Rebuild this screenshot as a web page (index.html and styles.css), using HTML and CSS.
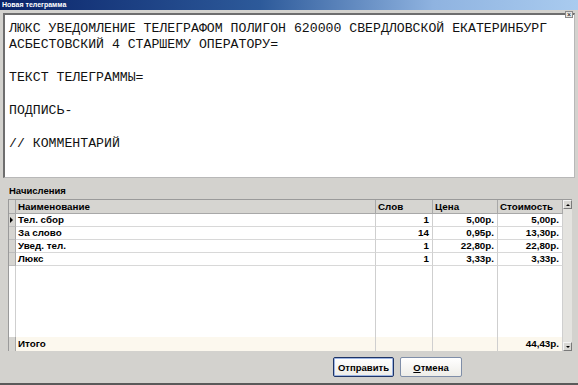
FILE: index.html
```html
<!DOCTYPE html>
<html lang="ru">
<head>
<meta charset="utf-8">
<title>Новая телеграмма</title>
<link rel="stylesheet" href="styles.css">
</head>
<body>
<div class="win">
  <div class="titlebar"><span class="title">Новая телеграмма</span></div>
  <span class="close">×</span>
  <div class="memo">ЛЮКС УВЕДОМЛЕНИЕ ТЕЛЕГРАФОМ ПОЛИГОН 620000 СВЕРДЛОВСКОЙ ЕКАТЕРИНБУРГ
АСБЕСТОВСКИЙ 4 СТАРШЕМУ ОПЕРАТОРУ=

ТЕКСТ ТЕЛЕГРАММЫ=

ПОДПИСЬ-

// КОММЕНТАРИЙ</div>
  <div class="panel">
    <div class="label">Начисления</div>
    <div class="gridwrap">
      <div class="grid">
        <div class="row head">
          <div class="cell ind"></div>
          <div class="cell">Наименование</div>
          <div class="cell">Слов</div>
          <div class="cell">Цена</div>
          <div class="cell">Стоимость</div>
        </div>
        <div class="row">
          <div class="cell ind"><span class="ptr"></span></div>
          <div class="cell">Тел. сбор</div>
          <div class="cell num">1</div>
          <div class="cell num">5,00р.</div>
          <div class="cell num">5,00р.</div>
        </div>
        <div class="row">
          <div class="cell ind"></div>
          <div class="cell">За слово</div>
          <div class="cell num">14</div>
          <div class="cell num">0,95р.</div>
          <div class="cell num">13,30р.</div>
        </div>
        <div class="row">
          <div class="cell ind"></div>
          <div class="cell">Увед. тел.</div>
          <div class="cell num">1</div>
          <div class="cell num">22,80р.</div>
          <div class="cell num">22,80р.</div>
        </div>
        <div class="row">
          <div class="cell ind"></div>
          <div class="cell">Люкс</div>
          <div class="cell num">1</div>
          <div class="cell num">3,33р.</div>
          <div class="cell num">3,33р.</div>
        </div>
        <div class="row filler">
          <div class="cell"></div>
          <div class="cell"></div>
          <div class="cell"></div>
          <div class="cell"></div>
          <div class="cell"></div>
        </div>
        <div class="row total">
          <div class="cell ind"></div>
          <div class="cell">Итого</div>
          <div class="cell"></div>
          <div class="cell"></div>
          <div class="cell num">44,43р.</div>
        </div>
      </div>
      <div class="vscroll">
        <div class="sbtn"><span class="tri up"></span></div>
        <div class="track"></div>
        <div class="sbtn"><span class="tri down"></span></div>
      </div>
    </div>
    <div class="buttons">
      <button class="btn default">Отправить</button>
      <button class="btn"><u>О</u>тмена</button>
    </div>
  </div>
</div>
</body>
</html>
```

FILE: styles.css
```css
* { box-sizing: border-box; }
html, body { margin: 0; padding: 0; }
body {
  width: 578px;
  height: 385px;
  overflow: hidden;
  background: #d3d2ce;
  font-family: "Liberation Sans", Arial, sans-serif;
}
.win {
  position: relative;
  width: 578px;
  height: 385px;
  display: flex;
  flex-direction: column;
  background: #d3d2ce;
  border-bottom: 2px solid #5a5a5a;
}
.titlebar {
  height: 10px;
  background: linear-gradient(to right, #0a246a 0%, #2d5a9a 45%, #8fb3e0 75%, #a9cbef 100%);
  padding-left: 2px;
  display: flex;
  align-items: center;
}
.title {
  color: #fff;
  font-size: 7px;
  font-weight: bold;
  line-height: 10px;
}
.close {
  position: absolute;
  right: 5px;
  top: 11px;
  width: 8px;
  height: 7px;
  background: #e6e5e1;
  border: 1px solid #8a8a8a;
  font-size: 7px;
  line-height: 5px;
  text-align: center;
  color: #000;
}
.memo {
  margin: 3px 3px 0 3px;
  height: 165px;
  background: #fff;
  border-style: solid;
  border-width: 2px 1px 1px 2px;
  border-color: #6e6e6e #b8b8b8 #b8b8b8 #6e6e6e;
  padding: 6px 4px;
  font-family: "Liberation Mono", "Courier New", monospace;
  font-size: 13.2px;
  line-height: 16.4px;
  white-space: pre;
  color: #111;
  overflow: hidden;
}
.panel {
  flex: 1;
  display: flex;
  flex-direction: column;
  padding: 0 6px 0 8px;
}
.label {
  height: 21px;
  padding-top: 8px;
  padding-left: 1px;
  font-size: 9.5px;
  font-weight: bold;
  line-height: 10px;
  color: #000;
}
.gridwrap {
  display: flex;
  height: 152px;
  border-top: 1px solid #9a9a9a;
  border-left: 1px solid #9a9a9a;
}
.grid {
  width: 555px;
  display: flex;
  flex-direction: column;
  background: #fff;
}
.row {
  display: grid;
  grid-template-columns: 7px 360px 57px 65px 65px;
  height: 13px;
}
.row.head { height: 14px; background: #d6d5d1; }
.row.filler { flex: 1; height: auto; }
.row.total { height: 14px; background: #fcf8ee; }
.cell {
  border-right: 1px solid #cfcfcf;
  border-bottom: 1px solid #d8d8d8;
  font-size: 9.8px;
  font-weight: bold;
  line-height: 12px;
  padding: 0 3px 0 2px;
  white-space: nowrap;
  overflow: hidden;
  color: #000;
}
.row.head .cell {
  border-right-color: #a8a8a8;
  border-bottom-color: #a8a8a8;
  line-height: 13px;
}
.row.filler .cell { border-bottom: none; }
.row.total .cell { line-height: 13px; border-bottom: none; }
.cell.ind {
  background: #d6d5d1;
  border-right-color: #a8a8a8;
  border-bottom-color: #bdbdbd;
  padding: 0;
}
.row.filler .cell:first-child { background: #fff; border-right-color: #cfcfcf; }
.num { text-align: right; }
.ptr {
  display: block;
  width: 0;
  height: 0;
  margin: 3px 0 0 1px;
  border-top: 3px solid transparent;
  border-bottom: 3px solid transparent;
  border-left: 3px solid #000;
}
.vscroll {
  width: 9px;
  display: flex;
  flex-direction: column;
  background: #e4e3df;
}
.sbtn {
  height: 9px;
  background: #d8d7d3;
  border: 1px solid;
  border-color: #f4f4f4 #7a7a7a #7a7a7a #f4f4f4;
  display: flex;
  align-items: center;
  justify-content: center;
}
.track { flex: 1; }
.tri {
  width: 0;
  height: 0;
  border-left: 2px solid transparent;
  border-right: 2px solid transparent;
}
.tri.up { border-bottom: 2px solid #000; }
.tri.down { border-top: 2px solid #000; }
.buttons {
  display: flex;
  justify-content: flex-end;
  gap: 6px;
  padding: 6px 110px 0 0;
}
.btn {
  width: 61px;
  height: 20px;
  padding: 0;
  background: linear-gradient(#ffffff, #eeede8);
  border: 1px solid #7f8ea8;
  border-radius: 2px;
  font-family: "Liberation Sans", Arial, sans-serif;
  font-size: 9.5px;
  font-weight: bold;
  color: #000;
}
.btn.default {
  border-color: #1e3466;
  box-shadow: inset 0 0 0 1px #9db5e3;
}
.btn + .btn { width: 62px; }
```
